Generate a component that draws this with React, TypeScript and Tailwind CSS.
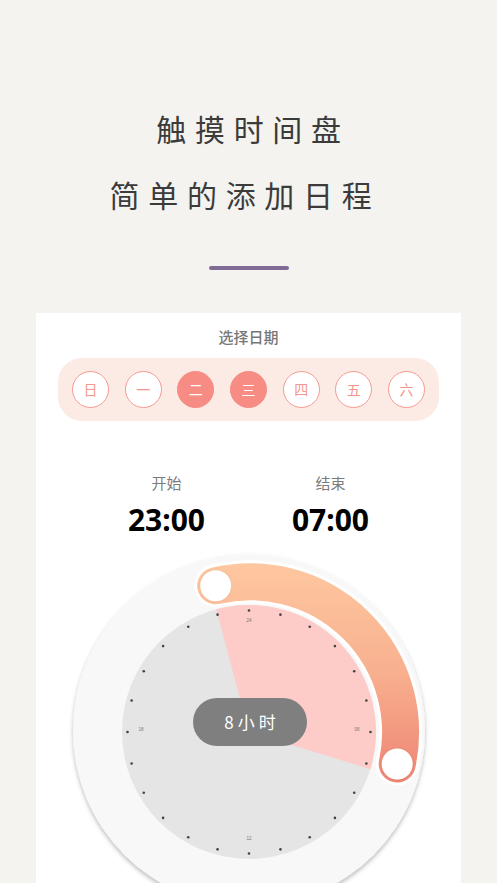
import React from "react";

const CX = 213;
const CY = 184;

function pt(r: number, deg: number): [number, number] {
  const a = (deg * Math.PI) / 180;
  return [CX + r * Math.sin(a), CY - r * Math.cos(a)];
}

function Dial() {
  const dots = Array.from({ length: 24 }, (_, i) => pt(121.5, i * 15));
  const [p1x, p1y] = pt(127, -15);
  const [p2x, p2y] = pt(127, 107);
  const k1: [number, number] = [179.7, 37.7];
  const k2: [number, number] = [361.2, 216];
  const band = `M ${k1[0]} ${k1[1]} A 150.5 150.5 0 0 1 ${k2[0]} ${k2[1]}`;
  return (
    <div className="relative w-[425px] h-[335px]">
      <svg width="425" height="335" viewBox="0 0 425 335" className="block">
        <defs>
          <filter id="sh" x="-20%" y="-20%" width="140%" height="140%">
            <feDropShadow dx="0" dy="2.5" stdDeviation="2" floodColor="#000" floodOpacity="0.28" />
          </filter>
          <filter id="sh2" x="-20%" y="-20%" width="140%" height="140%">
            <feDropShadow dx="0" dy="0" stdDeviation="1" floodColor="#000" floodOpacity="0.12" />
          </filter>
          <linearGradient id="bandg" x1="0" y1="16" x2="0" y2="234" gradientUnits="userSpaceOnUse">
            <stop offset="0" stopColor="#fec7a0" />
            <stop offset="0.5" stopColor="#f8b08f" />
            <stop offset="1" stopColor="#ee8473" />
          </linearGradient>
        </defs>
        <circle cx={CX} cy={CY - 1.5} r="176" fill="#f8f8f8" filter="url(#sh)" />
        <circle cx={CX} cy={CY} r="127" fill="#e5e5e5" />
        <path
          d={`M ${CX} ${CY} L ${p1x} ${p1y} A 127 127 0 0 1 ${p2x} ${p2y} Z`}
          fill="#fdcbc8"
        />
        {dots.map(([x, y], i) => (
          <circle key={i} cx={x} cy={y} r="1.3" fill="#444" />
        ))}
        <g fontFamily="'Liberation Sans', sans-serif" fontSize="4.5" fill="#777" textAnchor="middle">
          <text x={CX} y={74}>24</text>
          <text x={321} y={183}>06</text>
          <text x={CX} y={292}>12</text>
          <text x={105} y={183}>18</text>
        </g>
        <path d={band} stroke="#ffffff" strokeWidth="43" strokeLinecap="round" fill="none" />
        <path d={band} stroke="url(#bandg)" strokeWidth="37" strokeLinecap="round" fill="none" />
        <circle cx={k1[0]} cy={k1[1]} r="15.5" fill="#fff" filter="url(#sh2)" />
        <circle cx={k2[0]} cy={k2[1]} r="15.5" fill="#fff" filter="url(#sh2)" />
      </svg>
      <div className="absolute left-[157px] top-[150px] w-[114px] h-[48px] rounded-full bg-[#7f7f7f] flex items-center justify-center">
        <span className="text-white text-[17px] tracking-[4px] pl-[4px] font-['Noto_Sans_CJK_SC',sans-serif]">
          8小时
        </span>
      </div>
    </div>
  );
}

const days = ["日", "一", "二", "三", "四", "五", "六"];
const selected = [2, 3];

export default function App() {
  return (
    <div className="w-full h-[883px] overflow-hidden bg-[#f4f3f0] flex flex-col items-center font-['Noto_Sans_CJK_SC',sans-serif]">
      <div className="mt-[110px] h-[36px] leading-[36px] text-[30px] text-[#3b3b3b] tracking-[8.7px] pl-[9px]">
        触摸时间盘
      </div>
      <div className="mt-[29.5px] h-[36px] leading-[36px] text-[30px] text-[#3b3b3b] tracking-[8.7px] pr-[7px]">
        简单的添加日程
      </div>
      <div className="mt-[54.5px] w-[80px] h-[4px] rounded-full bg-[#806b95]" />
      <div className="mt-[43px] w-[425px] flex-1 bg-white flex flex-col items-center">
        <div className="mt-[14px] h-[20px] leading-[20px] text-[15px] font-medium text-[#777]">
          选择日期
        </div>
        <div className="mt-[11px] w-[381px] h-[63px] rounded-[24px] bg-[#fcebe5] flex items-center justify-between px-[14px]">
          {days.map((d, i) => {
            const sel = selected.includes(i);
            return (
              <div
                key={d}
                className={
                  sel
                    ? "w-[37px] h-[37px] rounded-full bg-[#f68c84] border-[1.5px] border-[#f68c84] flex items-center justify-center text-[14px] text-white"
                    : "w-[37px] h-[37px] rounded-full bg-white border-[1.5px] border-[#f59a90] flex items-center justify-center text-[14px] text-[#f3978d]"
                }
              >
                {d}
              </div>
            );
          })}
        </div>
        <div className="mt-[52px] flex">
          <div className="w-[164px] flex flex-col items-center">
            <div className="h-[20px] leading-[20px] text-[15px] text-[#7c7c7c]">开始</div>
            <div className="mt-[9px] h-[36px] leading-[36px] text-[30px] font-bold text-black font-['Noto_Sans',sans-serif]">
              23:00
            </div>
          </div>
          <div className="w-[164px] flex flex-col items-center">
            <div className="h-[20px] leading-[20px] text-[15px] text-[#7c7c7c]">结束</div>
            <div className="mt-[9px] h-[36px] leading-[36px] text-[30px] font-bold text-black font-['Noto_Sans',sans-serif]">
              07:00
            </div>
          </div>
        </div>
        <div className="mt-[10px]">
          <Dial />
        </div>
      </div>
    </div>
  );
}
